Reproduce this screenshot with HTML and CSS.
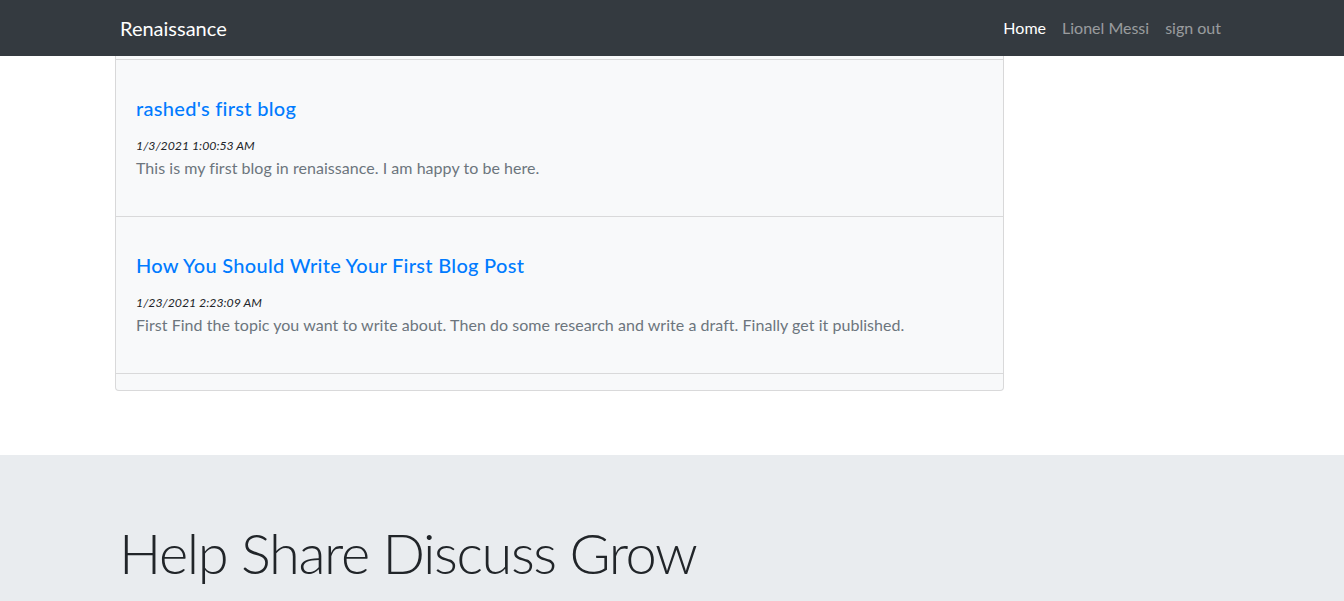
FILE: index.html
```html
<!DOCTYPE html>
<html lang="en">
<head>
<meta charset="utf-8">
<title>Renaissance</title>
<link rel="stylesheet" href="styles.css">
</head>
<body>
<nav class="navbar">
  <div class="nav-inner">
    <a class="brand" href="#">Renaissance</a>
    <ul class="nav-links">
      <li><a class="nav-link active" href="#">Home</a></li>
      <li><a class="nav-link" href="#">Lionel Messi</a></li>
      <li><a class="nav-link" href="#">sign out</a></li>
    </ul>
  </div>
</nav>
<main class="main">
  <div class="card">
    <div class="card-top"></div>
    <div class="post">
      <h5 class="post-title"><a href="#">rashed's first blog</a></h5>
      <div class="post-date">1/3/2021 1:00:53 AM</div>
      <p class="post-text">This is my first blog in renaissance. I am happy to be here.</p>
    </div>
    <div class="post">
      <h5 class="post-title"><a href="#">How You Should Write Your First Blog Post</a></h5>
      <div class="post-date">1/23/2021 2:23:09 AM</div>
      <p class="post-text">First Find the topic you want to write about. Then do some research and write a draft. Finally get it published.</p>
    </div>
    <div class="card-bottom"></div>
  </div>
</main>
<section class="jumbotron">
  <div class="jumbo-inner">
    <h1 class="display">Help Share Discuss Grow</h1>
  </div>
</section>
</body>
</html>
```
FILE: styles.css
```css
* { box-sizing: border-box; }
html, body { margin: 0; padding: 0; }
body {
  font-family: Lato, "Noto Sans", "Liberation Sans", sans-serif;
  font-size: 16px;
  line-height: 1.5;
  color: #212529;
  background: #fff;
  overflow: hidden;
}
a { text-decoration: none; }

.navbar {
  background: #343a40;
  height: 56px;
}
.nav-inner {
  max-width: 1140px;
  margin: 0 auto;
  height: 56px;
  padding: 0 13px 0 15px;
  display: flex;
  align-items: center;
  justify-content: space-between;
}
.brand {
  color: #fff;
  font-size: 20px;
  line-height: 30px;
  padding-left: 3px;
}
.nav-links {
  list-style: none;
  margin: 0;
  padding: 0;
  display: flex;
}
.nav-link {
  display: block;
  padding: 8px 8px;
  color: rgba(255,255,255,.5);
  font-size: 16px;
  line-height: 24px;
}
.nav-link.active { color: #fff; }

.main {
  max-width: 1140px;
  margin: 0 auto;
  padding: 0 13px;
}
.card {
  width: 889px;
  background: #f8f9fa;
  border: 1px solid rgba(0,0,0,.125);
  border-top: 0;
  border-radius: 0 0 4px 4px;
}
.card-top { height: 3px; }
.post {
  border-top: 1px solid rgba(0,0,0,.125);
  padding: 36px 20px 36px;
}
.post-title {
  margin: 0 0 16px;
  font-size: 20px;
  font-weight: 500;
  line-height: 24px;
  letter-spacing: 0.3px;
}
.post-title a { color: #007bff; }
.post-date {
  font-size: 12.3px;
  font-style: italic;
  line-height: 19px;
  color: #212529;
}
.post-text {
  margin: 1px 0 0;
  color: #6c757d;
  font-size: 16px;
  line-height: 24px;
  letter-spacing: 0.04px;
}
.card-bottom {
  border-top: 1px solid rgba(0,0,0,.125);
  height: 17px;
}

.jumbotron {
  margin-top: 64px;
  background: #e9ecef;
  padding: 64px 0;
}
.jumbo-inner {
  max-width: 1140px;
  margin: 0 auto;
  padding: 0 15px;
}
.display {
  margin: 0;
  font-size: 56px;
  font-weight: 300;
  line-height: 1.2;
  padding-left: 2px;
  letter-spacing: -1.4px;
}
```
